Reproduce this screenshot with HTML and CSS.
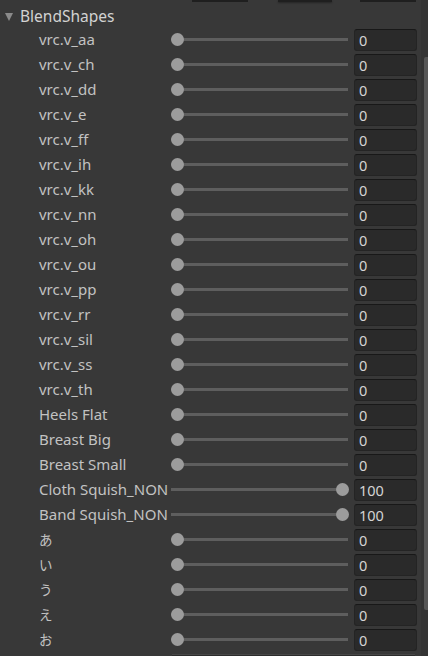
FILE: index.html
```html
<!DOCTYPE html>
<html>
<head>
<meta charset="utf-8">
<link rel="stylesheet" href="styles.css">
</head>
<body>
<div class="page">
  <div class="content">
    <div class="topbar">
      <span class="tb tb1"></span><span class="tb tb2"></span><span class="tb tb3"></span>
    </div>
    <div class="header"><span class="tri"></span><span class="htitle">BlendShapes</span></div>
    <div class="row"><span class="label">vrc.v_aa</span><div class="slider"><span class="track"></span><span class="knob"></span></div><div class="field">0</div></div>
    <div class="row"><span class="label">vrc.v_ch</span><div class="slider"><span class="track"></span><span class="knob"></span></div><div class="field">0</div></div>
    <div class="row"><span class="label">vrc.v_dd</span><div class="slider"><span class="track"></span><span class="knob"></span></div><div class="field">0</div></div>
    <div class="row"><span class="label">vrc.v_e</span><div class="slider"><span class="track"></span><span class="knob"></span></div><div class="field">0</div></div>
    <div class="row"><span class="label">vrc.v_ff</span><div class="slider"><span class="track"></span><span class="knob"></span></div><div class="field">0</div></div>
    <div class="row"><span class="label">vrc.v_ih</span><div class="slider"><span class="track"></span><span class="knob"></span></div><div class="field">0</div></div>
    <div class="row"><span class="label">vrc.v_kk</span><div class="slider"><span class="track"></span><span class="knob"></span></div><div class="field">0</div></div>
    <div class="row"><span class="label">vrc.v_nn</span><div class="slider"><span class="track"></span><span class="knob"></span></div><div class="field">0</div></div>
    <div class="row"><span class="label">vrc.v_oh</span><div class="slider"><span class="track"></span><span class="knob"></span></div><div class="field">0</div></div>
    <div class="row"><span class="label">vrc.v_ou</span><div class="slider"><span class="track"></span><span class="knob"></span></div><div class="field">0</div></div>
    <div class="row"><span class="label">vrc.v_pp</span><div class="slider"><span class="track"></span><span class="knob"></span></div><div class="field">0</div></div>
    <div class="row"><span class="label">vrc.v_rr</span><div class="slider"><span class="track"></span><span class="knob"></span></div><div class="field">0</div></div>
    <div class="row"><span class="label">vrc.v_sil</span><div class="slider"><span class="track"></span><span class="knob"></span></div><div class="field">0</div></div>
    <div class="row"><span class="label">vrc.v_ss</span><div class="slider"><span class="track"></span><span class="knob"></span></div><div class="field">0</div></div>
    <div class="row"><span class="label">vrc.v_th</span><div class="slider"><span class="track"></span><span class="knob"></span></div><div class="field">0</div></div>
    <div class="row"><span class="label">Heels Flat</span><div class="slider"><span class="track"></span><span class="knob"></span></div><div class="field">0</div></div>
    <div class="row"><span class="label">Breast Big</span><div class="slider"><span class="track"></span><span class="knob"></span></div><div class="field">0</div></div>
    <div class="row"><span class="label">Breast Small</span><div class="slider"><span class="track"></span><span class="knob"></span></div><div class="field">0</div></div>
    <div class="row"><span class="label">Cloth Squish_NON</span><div class="slider full"><span class="track"></span><span class="knob"></span></div><div class="field">100</div></div>
    <div class="row"><span class="label">Band Squish_NON</span><div class="slider full"><span class="track"></span><span class="knob"></span></div><div class="field">100</div></div>
    <div class="row"><span class="label jp">あ</span><div class="slider"><span class="track"></span><span class="knob"></span></div><div class="field">0</div></div>
    <div class="row"><span class="label jp">い</span><div class="slider"><span class="track"></span><span class="knob"></span></div><div class="field">0</div></div>
    <div class="row"><span class="label jp">う</span><div class="slider"><span class="track"></span><span class="knob"></span></div><div class="field">0</div></div>
    <div class="row"><span class="label jp">え</span><div class="slider"><span class="track"></span><span class="knob"></span></div><div class="field">0</div></div>
    <div class="row"><span class="label jp">お</span><div class="slider"><span class="track"></span><span class="knob"></span></div><div class="field">0</div></div>
    <div class="nextrow"></div>
  </div>
  <div class="scrollbar"><div class="thumb"></div></div>
</div>
</body>
</html>
```
FILE: styles.css
```css
html, body {
  margin: 0;
  padding: 0;
  background: #383838;
  overflow: hidden;
}
body {
  width: 428px;
  height: 656px;
  font-family: "Noto Sans", "Noto Sans CJK JP", sans-serif;
  color: #c8c8c8;
}
.page {
  display: flex;
  width: 428px;
  height: 656px;
  overflow: hidden;
}
.content {
  width: 421px;
  flex: none;
}
.topbar {
  height: 2px;
  display: flex;
}
.tb {
  display: block;
  height: 2px;
  background: #1f1f1f;
}
.tb1 { margin-left: 192px; width: 56px; }
.tb2 { margin-left: 30px; width: 54px; box-shadow: 0 1px 2px rgba(0,0,0,0.35); }
.tb3 { margin-left: 28px; width: 56px; }
.header {
  height: 22px;
  padding-top: 3px;
  line-height: 22px;
  display: flex;
  align-items: center;
}
.tri {
  margin-left: 5px;
  width: 0;
  height: 0;
  border-left: 4px solid transparent;
  border-right: 4px solid transparent;
  border-top: 8px solid #8a8a8a;
  margin-right: 7px;
  margin-top: 1px;
}
.htitle {
  font-size: 15.5px;
  color: #d2d2d2;
}
.row {
  height: 25px;
  display: flex;
  align-items: center;
  padding-left: 39px;
}
.label {
  width: 132px;
  flex: none;
  font-size: 15px;
  white-space: nowrap;
  color: #c2c2c2;
  line-height: 25px;
}
.label.jp {
  font-family: "Noto Sans CJK JP", sans-serif;
  font-size: 13.5px;
}
.slider {
  position: relative;
  width: 177px;
  height: 13px;
  flex: none;
}
.track {
  position: absolute;
  left: 0;
  right: 0;
  top: 5px;
  height: 3px;
  background: #5e5e5e;
}
.knob {
  position: absolute;
  left: 0;
  top: 0;
  width: 13px;
  height: 13px;
  border-radius: 50%;
  background: #9c9c9c;
}
.slider.full .knob {
  left: 165px;
}
.field {
  margin-left: 6px;
  width: 57px;
  height: 20px;
  flex: none;
  box-sizing: content-box;
  background: #2a2a2a;
  border: 1px solid #242424;
  border-top-color: #181818;
  border-radius: 3px;
  padding-left: 4px;
  font-size: 14.5px;
  line-height: 21px;
  color: #d4d4d4;
}
.nextrow {
  margin-left: 172px;
  width: 243px;
  height: 3px;
  margin-top: 2px;
  background: #2c2c2c;
  border-top: 1px solid #474747;
}
.scrollbar {
  width: 7px;
  flex: none;
  background: #343434;
  display: flex;
  justify-content: flex-end;
}
.thumb {
  margin-top: 57px;
  width: 4px;
  height: 553px;
  background: #565656;
  border-radius: 2px 0 0 2px;
}
```
